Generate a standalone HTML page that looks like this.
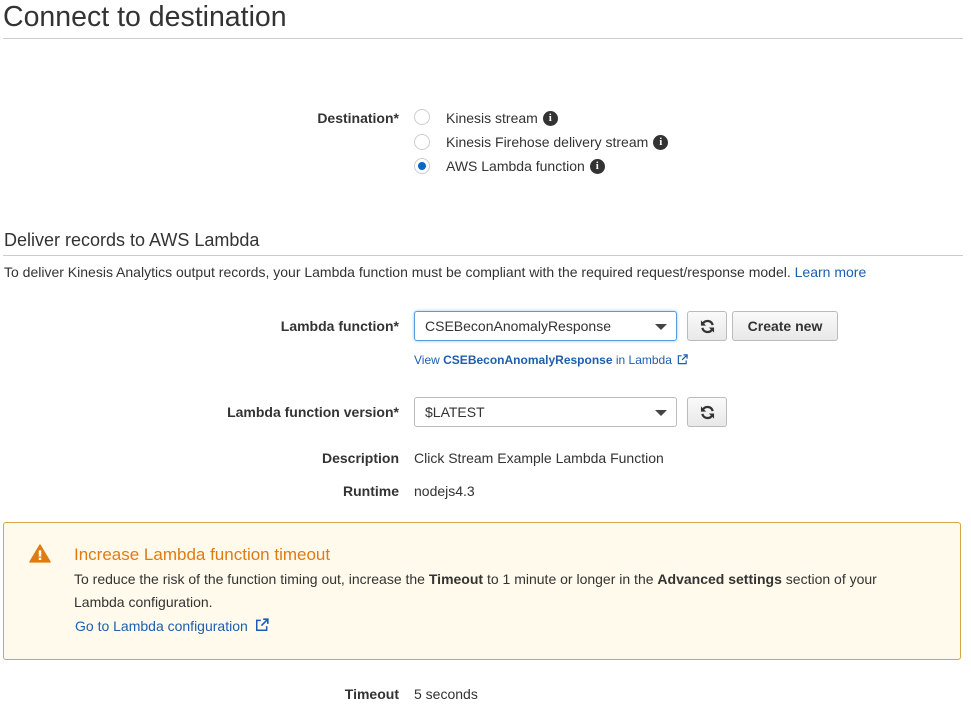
<!DOCTYPE html>
<html><head><style>
body{margin:0;width:971px;height:708px;background:#fff;font-family:"Liberation Sans",Arial,sans-serif;color:#333;position:relative;overflow:hidden}
.a{position:absolute;white-space:nowrap}
.lbl{font-weight:bold;font-size:14px;text-align:right;width:395px;left:4px}
.t{font-size:14px}
.radio{position:absolute;width:14px;height:14px;border:1px solid #ccc;border-radius:50%;background:#fff;left:414px}
.radio.on::after{content:"";position:absolute;left:3px;top:3px;width:8px;height:8px;border-radius:50%;background:#0b67c5}
.info{display:inline-block;width:15px;height:15px;border-radius:50%;background:#333;color:#fff;font-size:11px;font-weight:bold;text-align:center;line-height:15px;font-family:"Liberation Serif",serif;vertical-align:top;margin-top:1px;margin-left:5px}
.sel{position:absolute;height:30px;border:1px solid #bbb;border-radius:3px;background:#fff;box-sizing:border-box;font-size:14px;line-height:28px;padding-left:10px}
.sel::after{content:"";position:absolute;right:9px;top:12px;border-left:6px solid transparent;border-right:6px solid transparent;border-top:6px solid #444}
.btn{position:absolute;height:30px;border:1px solid #bbb;border-radius:3px;background:linear-gradient(#fafafa,#e8e8e8);box-sizing:border-box;font-size:14px;font-weight:bold;line-height:28px;text-align:center}
.btn svg{position:absolute;left:12px;top:7px}
a{color:#1d5eb0;text-decoration:none}
</style></head><body>
<div class="a" style="left:3px;top:1px;font-size:28.5px;color:#333">Connect to destination</div>
<div class="a" style="left:3px;top:38px;width:960px;height:1px;background:#ccc"></div>

<div class="a lbl" style="top:110px">Destination*</div>
<div class="radio" style="top:109px"></div><div class="a t" style="left:446px;top:110px">Kinesis stream<span class="info">i</span></div>
<div class="radio" style="top:134px"></div><div class="a t" style="left:446px;top:134px">Kinesis Firehose delivery stream<span class="info">i</span></div>
<div class="radio on" style="top:158px"></div><div class="a t" style="left:446px;top:158px">AWS Lambda function<span class="info">i</span></div>

<div class="a" style="left:4px;top:230px;font-size:18px">Deliver records to AWS Lambda</div>
<div class="a" style="left:3px;top:255px;width:960px;height:1px;background:#ccc"></div>
<div class="a" style="left:4px;top:264px;font-size:14px">To deliver Kinesis Analytics output records, your Lambda function must be compliant with the required request/response model. <a>Learn more</a></div>

<div class="a lbl" style="top:318px">Lambda function*</div>
<div class="sel" style="left:414px;top:311px;width:263px;border-color:#5b9bd8;box-shadow:0 0 3px #9cc3ea">CSEBeconAnomalyResponse</div>
<div class="btn" style="left:687px;top:311px;width:40px"><svg width="15" height="15" viewBox="0 0 16 16"><path d="M13.5 6.5A5.7 5.7 0 0 0 3 5" fill="none" stroke="#333" stroke-width="2.4"/><path d="M1 1.5V7h5.5z" fill="#333"/><path d="M2.5 9.5A5.7 5.7 0 0 0 13 11" fill="none" stroke="#333" stroke-width="2.4"/><path d="M15 14.5V9H9.5z" fill="#333"/></svg></div>
<div class="btn" style="left:732px;top:311px;width:106px">Create new</div>
<div class="a" style="left:414px;top:353px;font-size:12px"><a>View <b>CSEBeconAnomalyResponse</b> in Lambda <svg width="11" height="11" viewBox="0 0 12 12" style="vertical-align:-1px;margin-left:2px"><path d="M5 2H1.5v8.5H10V7" fill="none" stroke="#1d5eb0" stroke-width="1.3"/><path d="M7 1h4v4M11 1L5.5 6.5" fill="none" stroke="#1d5eb0" stroke-width="1.4"/></svg></a></div>

<div class="a lbl" style="top:404px">Lambda function version*</div>
<div class="sel" style="left:414px;top:397px;width:263px">$LATEST</div>
<div class="btn" style="left:687px;top:397px;width:40px"><svg width="15" height="15" viewBox="0 0 16 16"><path d="M13.5 6.5A5.7 5.7 0 0 0 3 5" fill="none" stroke="#333" stroke-width="2.4"/><path d="M1 1.5V7h5.5z" fill="#333"/><path d="M2.5 9.5A5.7 5.7 0 0 0 13 11" fill="none" stroke="#333" stroke-width="2.4"/><path d="M15 14.5V9H9.5z" fill="#333"/></svg></div>

<div class="a lbl" style="top:450px">Description</div>
<div class="a t" style="left:414px;top:450px">Click Stream Example Lambda Function</div>
<div class="a lbl" style="top:483px">Runtime</div>
<div class="a t" style="left:414px;top:483px">nodejs4.3</div>

<div class="a" style="left:3px;top:522px;width:958px;height:138px;box-sizing:border-box;border:1px solid #d9a34a;border-radius:3px;background:#fffaeb"></div>
<svg class="a" style="left:29px;top:544px" width="22" height="19" viewBox="0 0 21 18"><path d="M10.5 1 L20 17 L1 17 Z" fill="#e07b12" stroke="#e07b12" stroke-linejoin="round" stroke-width="1.5"/><rect x="9.3" y="6" width="2.4" height="6" fill="#fff"/><rect x="9.3" y="13" width="2.4" height="2.2" fill="#fff"/></svg>
<div class="a" style="left:74px;top:545px;font-size:17px;color:#e07b12">Increase Lambda function timeout</div>
<div class="a" style="left:74px;top:568px;font-size:14px;line-height:23px">To reduce the risk of the function timing out, increase the <b>Timeout</b> to 1 minute or longer in the <b>Advanced settings</b> section of your<br>Lambda configuration.</div>
<div class="a" style="left:75px;top:618px;font-size:14px"><a>Go to Lambda configuration <svg width="14" height="14" viewBox="0 0 12 12" style="vertical-align:-1px;margin-left:3px"><path d="M5 2H1.5v8.5H10V7" fill="none" stroke="#1d5eb0" stroke-width="1.3"/><path d="M7 1h4v4M11 1L5.5 6.5" fill="none" stroke="#1d5eb0" stroke-width="1.4"/></svg></a></div>

<div class="a lbl" style="top:686px">Timeout</div>
<div class="a t" style="left:414px;top:686px">5 seconds</div>
</body></html>
